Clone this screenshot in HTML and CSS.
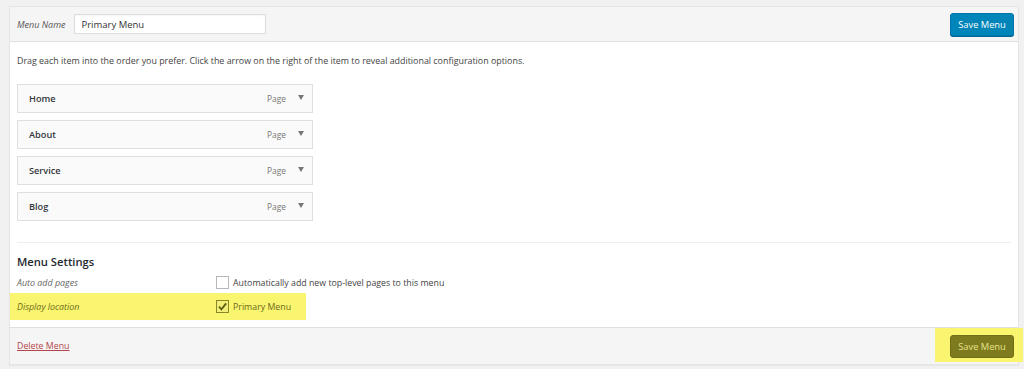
FILE: index.html
```html
<!DOCTYPE html>
<html>
<head>
<meta charset="utf-8">
<link rel="stylesheet" href="styles.css">
</head>
<body>
<div class="menu-edit">
  <div class="menu-header">
    <label class="name-label">Menu Name</label>
    <input class="name-input" type="text" value="Primary Menu">
    <button class="btn-primary">Save Menu</button>
  </div>
  <div class="menu-body">
    <p class="instructions">Drag each item into the order you prefer. Click the arrow on the right of the item to reveal additional configuration options.</p>
    <ul class="items">
      <li class="item"><span class="item-title">Home</span><span class="item-type">Page</span><span class="arrow"></span></li>
      <li class="item"><span class="item-title">About</span><span class="item-type">Page</span><span class="arrow"></span></li>
      <li class="item"><span class="item-title">Service</span><span class="item-type">Page</span><span class="arrow"></span></li>
      <li class="item"><span class="item-title">Blog</span><span class="item-type">Page</span><span class="arrow"></span></li>
    </ul>
    <div class="settings">
      <h3 class="settings-title">Menu Settings</h3>
      <div class="setting-row">
        <span class="setting-label">Auto add pages</span>
        <span class="setting-field"><span class="checkbox"></span>Automatically add new top-level pages to this menu</span>
      </div>
      <div class="setting-row highlight">
        <span class="setting-label">Display location</span>
        <span class="setting-field"><span class="checkbox checked"><svg viewBox="0 0 12 12" width="11" height="11"><path d="M2.2 6.2 L4.8 9 L10 2.6" fill="none" stroke="#5f5f14" stroke-width="2"/></svg></span>Primary Menu</span>
      </div>
    </div>
  </div>
  <div class="menu-footer">
    <a class="delete-link" href="#">Delete Menu</a>
    <div class="save-highlight"><button class="btn-olive">Save Menu</button></div>
  </div>
</div>
</body>
</html>
```
FILE: styles.css
```css
* { box-sizing: border-box; }
html, body { margin: 0; }
body {
  background: #f1f1f1;
  padding: 6px 5px 4px 9px;
  font-family: "Open Sans", "Noto Sans", sans-serif;
  font-size: 9px;
  color: #444;
}
.menu-edit {
  border: 1px solid #e5e5e5;
  background: #fff;
  box-shadow: 0 1px 1px rgba(0,0,0,.04);
}
.menu-header {
  display: flex;
  align-items: center;
  height: 35px;
  padding: 0 4px 0 7px;
  background: #f5f5f5;
  border-bottom: 1px solid #dfdfdf;
}
.name-label {
  font-style: italic;
  color: #555;
  font-size: 9px;
  margin-right: 9px;
}
.name-input {
  width: 192px;
  height: 20px;
  border: 1px solid #ddd;
  background: #fff;
  font-family: inherit;
  font-size: 9.5px;
  color: #333;
  padding: 0 6px;
  box-shadow: inset 0 1px 2px rgba(0,0,0,.04);
}
.btn-primary {
  margin-left: auto;
  height: 23px;
  width: 64px;
  border: 1px solid #0073aa;
  border-radius: 3px;
  background: #0085ba;
  color: #fff;
  font-family: inherit;
  font-size: 9.3px;
  padding: 0;
  box-shadow: 0 1px 0 #006799;
}
.menu-body {
  padding: 0 7px;
}
.instructions {
  margin: 0;
  padding: 12px 0 0 0;
  height: 42px;
  line-height: 14px;
  color: #444;
  font-size: 8.9px;
}
.items {
  list-style: none;
  margin: 0;
  padding: 0;
  width: 296px;
  display: flex;
  flex-direction: column;
  gap: 7px;
}
.item {
  display: flex;
  align-items: center;
  height: 29px;
  border: 1px solid #dfdfdf;
  background: #fafafa;
  padding: 0 8px 0 11px;
}
.item-title {
  font-weight: 600;
  color: #32373c;
  font-size: 9.2px;
}
.item-type {
  margin-left: auto;
  color: #777;
  font-size: 8.4px;
}
.arrow {
  margin-left: 12px;
  width: 0;
  height: 0;
  border-left: 3px solid transparent;
  border-right: 3px solid transparent;
  border-top: 5px solid #787878;
  margin-bottom: 2px;
}
.settings {
  margin-top: 21px;
  border-top: 1px solid #eee;
  padding-top: 9px;
  padding-bottom: 7px;
}
.settings-title {
  margin: 0;
  font-size: 11.2px;
  font-weight: 600;
  color: #23282d;
  line-height: 20px;
}
.setting-row {
  display: flex;
  align-items: center;
  height: 21px;
}
.setting-label {
  width: 199px;
  font-style: italic;
  color: #666;
  font-size: 8.9px;
}
.setting-field {
  display: flex;
  align-items: center;
  font-size: 8.8px;
  color: #444;
}
.checkbox {
  display: inline-flex;
  width: 13px;
  height: 13px;
  border: 1px solid #b4b9be;
  background: #fff;
  margin-right: 4px;
  align-items: center;
  justify-content: center;
}
.highlight {
  height: 27px;
  width: 296px;
  margin-left: -7px;
  padding-left: 7px;
  background: #f9f56e;
}
.highlight .setting-label { color: #6d6a1c; }
.highlight .setting-field { color: #6d6a1c; }
.highlight .checkbox {
  border-color: #8a8726;
  background: #f3ee78;
}
.menu-footer {
  display: flex;
  align-items: center;
  height: 37px;
  padding-left: 7px;
  background: #f5f5f5;
  border-top: 1px solid #dfdfdf;
}
.delete-link {
  color: #b3454a;
  font-size: 8.8px;
  text-decoration: underline;
}
.save-highlight {
  margin-left: auto;
  margin-right: -5px;
  align-self: flex-start;
  background: #f9f56e;
  height: 34px;
  padding: 7px 9px 0 15px;
}
.btn-olive {
  display: block;
  height: 23px;
  width: 64px;
  border: 1px solid #6f6c1a;
  border-radius: 3px;
  background: #7e7b1f;
  color: #e6e28a;
  font-family: inherit;
  font-size: 9.3px;
  padding: 0;
}
```
